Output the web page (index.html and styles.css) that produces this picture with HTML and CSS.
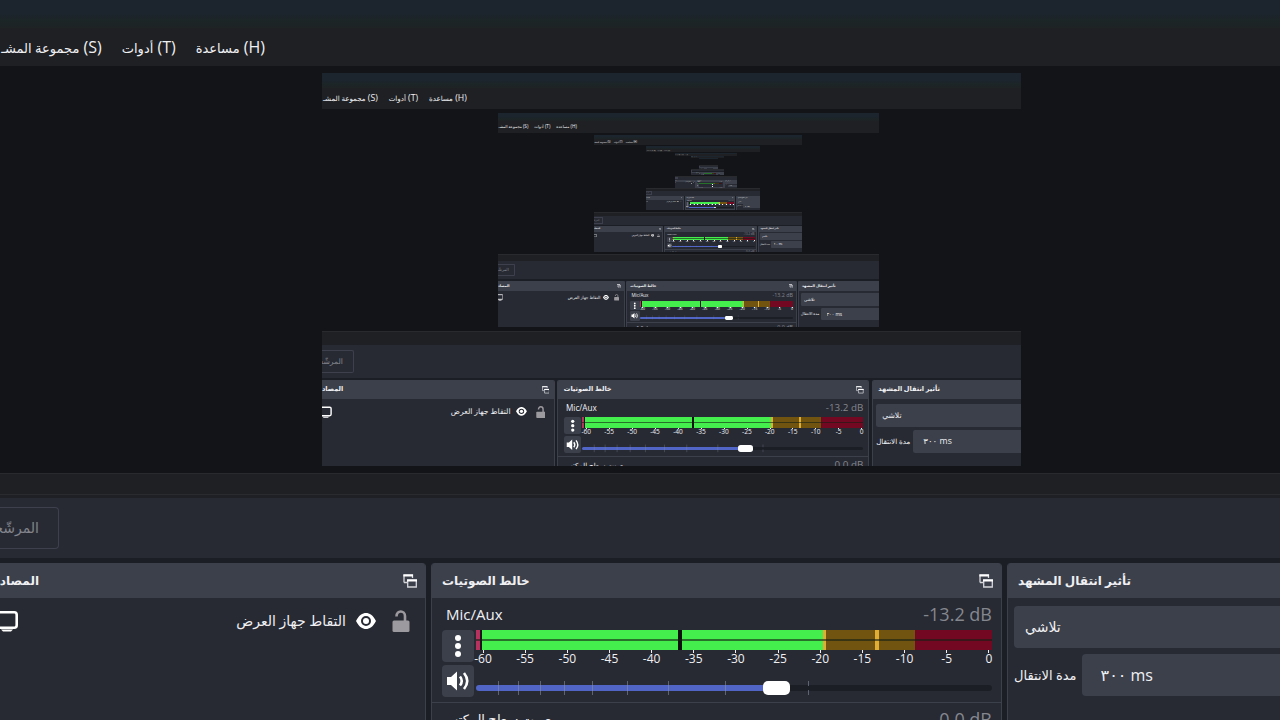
FILE: index.html
```html
<!DOCTYPE html>
<html lang="ar">
<head>
<meta charset="utf-8">
<title>OBS</title>
<link rel="stylesheet" href="styles.css">
</head>
<body>
<main id="root"></main>

<template id="window-template">
  <div class="window">
    <div class="titlebar"></div>
    <nav class="menubar">
      <button class="menu-item" type="button"><span class="ar">مجموعة المشـ</span> (S)</button>
      <button class="menu-item" type="button"><span class="ar">أدوات</span> (T)</button>
      <button class="menu-item" type="button"><span class="ar">مساعدة</span> (H)</button>
    </nav>
    <section class="preview"><div class="screen"></div></section>
    <div class="splitter"></div>
    <div class="toolbar"><button class="filters" type="button" disabled><span>المرشّحـ</span></button></div>
    <div class="docks">
      <section class="dock sources">
        <header class="dock-head">
          <h2 class="cut-title">المصاد</h2>
          <button class="popout" type="button" aria-label="Undock"><svg viewBox="0 0 14 14" width="14" height="14"><path d="M1 8.500V1H9.500V4M1 8.500H4" fill="none" stroke="#d5d6dc" stroke-width="1.300"/><path d="M.4 1.500H10" stroke="#fff" stroke-width="2"/><path d="M4.700 6H13.300V13H4.700z" fill="#3c404b" stroke="#d5d6dc" stroke-width="1.300"/><path d="M4 6.500H14" stroke="#fff" stroke-width="2"/></svg></button>
        </header>
        <div class="source-row">
          <svg class="monitor" viewBox="0 0 18 22" width="18" height="22"><rect x="-8" y="2.300" width="24.700" height="15.500" rx="2.500" fill="none" stroke="#fff" stroke-width="2.600"/><path d="M1 19.500H13L11 21.500H3z" fill="#fff"/></svg>
          <span class="source-name">التقاط جهاز العرض</span>
          <button class="icon" type="button" aria-label="Visible"><svg viewBox="0 0 20 16" width="20" height="16"><path fill-rule="evenodd" d="M0 8C3 2 6.500 0 10 0S17 2 20 8C17 14 13.500 16 10 16S3 14 0 8zM10 3A5 5 0 1 0 10 13 5 5 0 1 0 10 3z" fill="#fff"/><circle cx="10" cy="8" r="3" fill="#fff"/></svg></button>
          <button class="icon" type="button" aria-label="Lock"><svg viewBox="0 0 18 22" width="18" height="22"><rect x="0.500" y="10.500" width="17" height="11.500" rx="1.500" fill="#9c9a9e"/><path d="M4.500 6.500C4.500-.5 13 .2 13 6V11" fill="none" stroke="#9c9a9e" stroke-width="2.600"/></svg></button>
        </div>
      </section>
      <section class="dock mixer">
        <header class="dock-head">
          <h2>خالط الصوتيات</h2>
          <button class="popout" type="button" aria-label="Undock"><svg viewBox="0 0 14 14" width="14" height="14"><path d="M1 8.500V1H9.500V4M1 8.500H4" fill="none" stroke="#d5d6dc" stroke-width="1.300"/><path d="M.4 1.500H10" stroke="#fff" stroke-width="2"/><path d="M4.700 6H13.300V13H4.700z" fill="#3c404b" stroke="#d5d6dc" stroke-width="1.300"/><path d="M4 6.500H14" stroke="#fff" stroke-width="2"/></svg></button>
        </header>
        <div class="channel">
          <div class="channel-head"><span>Mic/Aux</span><span class="level">-13.2 dB</span></div>
          <div class="channel-body">
            <div class="channel-buttons">
              <button type="button" aria-label="Options"><svg viewBox="0 0 32 32" width="32" height="32" fill="#fff"><circle cx="16" cy="8" r="3"/><circle cx="16" cy="16" r="3"/><circle cx="16" cy="24" r="3"/></svg></button>
              <button type="button" aria-label="Mute"><svg viewBox="0 0 32 32" width="32" height="32"><path d="M5 12H9L15 6.500V25.500L9 20H5z" fill="#fff"/><path d="M18 11.500Q21.500 16 18 20.500M22 8Q28.500 16 22 24" fill="none" stroke="#fff" stroke-width="2.600"/></svg></button>
            </div>
            <div class="channel-controls">
              <div class="meter"></div>
              <div class="scale"><span>-60</span><span>-55</span><span>-50</span><span>-45</span><span>-40</span><span>-35</span><span>-30</span><span>-25</span><span>-20</span><span>-15</span><span>-10</span><span>-5</span><span>0</span></div>
              <div class="volume">
                <input type="range" min="0" max="1000" value="586" aria-label="Mic/Aux">
                <svg class="marks" viewBox="0 0 516 16" preserveAspectRatio="none"><path d="M22.500 1V15M42.500 1V15M64.500 1V15M88.500 1V15M116.500 1V15M151.500 1V15M192.500 1V15M249.500 1V15M332.500 1V6M332.500 10V15" stroke="#8d93a6" stroke-opacity=".55" stroke-width="1"/></svg>
              </div>
            </div>
          </div>
        </div>
        <div class="channel">
          <div class="channel-head"><span class="ar">صوت سطح المكتب</span><span class="level">0.0 dB</span></div>
        </div>
      </section>
      <section class="dock transitions">
        <header class="dock-head"><h2>تأثير انتقال المشهد</h2></header>
        <div class="transition-form">
          <select aria-label="تأثير انتقال المشهد"><option>تلاشي</option></select>
          <label class="duration"><span>مدة الانتقال</span><input type="text" value="٣٠٠ ms" dir="ltr"></label>
        </div>
      </section>
    </div>
  </div>
</template>
<script src="app.js"></script>
</body>
</html>
```

FILE: styles.css
```css
* { box-sizing: border-box; }
body { margin: 0; background: #1d1f26; overflow: hidden; }
#root { height: 100vh; display: grid; }

.window {
  min-width: 0;
  min-height: 0;
  display: flex;
  flex-direction: column;
  overflow: hidden;
  background: #1c1e26;
  color: #f0f0f3;
  font: 16px/20px "Open Sans", "DejaVu Sans", sans-serif;
}
.screen > .window { zoom: 0.546; }
button { font: inherit; color: inherit; background: none; border: 0; padding: 0; }
svg { display: block; }
.ar { font-size: 13px; }

.titlebar { flex: none; height: 28px; background: linear-gradient(#1c242d 50%, #1c2526 75%, #1e2324); }
.menubar {
  flex: none;
  height: 38px;
  width: 100%;
  padding-right: calc(100% - 265px);
  display: flex;
  justify-content: flex-end;
  align-items: center;
  gap: 20px;
  background: #1f2023;
}
.menu-item { flex: none; white-space: nowrap; }

.preview { flex: none; padding: 7px 0; background: #131418; }
.screen {
  width: 54.6%;
  aspect-ratio: 16 / 9;
  margin-left: 25.16%;
  display: grid;
  overflow: hidden;
  background: #131418;
}

.splitter {
  flex: none;
  height: 25px;
  background: linear-gradient(#1f2023 20px, #292b2f 20px, #292b2f 21px, #1e2025 21px);
  border-top: 1px solid #292a2e;
}
.toolbar { flex: none; height: 60px; padding: 9px 0; background: #272a33; }
.filters {
  width: 59px;
  height: 42px;
  padding-right: 19px;
  display: flex;
  justify-content: flex-end;
  align-items: center;
  overflow: hidden;
  border: 1px solid #3e414d;
  border-left: 0;
  border-radius: 0 4px 4px 0;
  color: #83858d;
  font-size: 14px;
}
.filters span { flex: none; }

.docks {
  flex: 1;
  min-height: 0;
  padding-top: 5px;
  display: grid;
  grid-template-columns: 426fr 571fr 273fr;
  gap: 5px;
}
.dock {
  min-width: 0;
  min-height: 0;
  overflow: hidden;
  background: #272a33;
  border: 1px solid #3c404b;
  border-width: 0 1px;
  border-radius: 4px 4px 0 0;
}
.sources { border-left: 0; border-top-left-radius: 0; }
.transitions { border-right: 0; border-top-right-radius: 0; }
.dock-head {
  height: 35px;
  padding: 0 8px 0 10px;
  display: flex;
  justify-content: space-between;
  align-items: center;
  background: #3c404b;
}
.sources .dock-head { padding-left: 0; }
.dock-head h2 { margin: 0; font-size: 12px; line-height: 20px; font-weight: 700; white-space: nowrap; }
.dock-head .cut-title { width: 39px; display: flex; justify-content: flex-end; }

.source-row { height: 45px; padding-right: 15px; display: flex; align-items: center; }
.source-name { margin-left: auto; font-size: 14px; }
.icon { margin-left: 10px; }
.icon + .icon { margin-left: 16px; }

.channel { padding: 6px 9px 5px 10px; border-bottom: 1px solid #3c404b; }
.channel-head { height: 20px; margin-bottom: 6px; padding-left: 4px; display: flex; justify-content: space-between; align-items: center; font-size: 15px; }
.channel-head .ar { font-size: 13px; }
.level { font-size: 18px; color: #85878f; }
.channel-body { display: flex; gap: 2px; }
.channel-buttons { flex: none; display: grid; gap: 3px; }
.channel-buttons button { width: 32px; height: 32px; border-radius: 4px; background: #3c404b; }
.channel-controls { flex: 1; min-width: 0; }
.meter {
  height: 20px;
  background:
    linear-gradient(transparent 45%, rgba(20, 30, 20, .6) 45%, rgba(20, 30, 20, .6) 53%, transparent 53%),
    linear-gradient(90deg,
      #b83260 0 .8%, #16171b .8% 1.2%, #44ee4d 1.2% 39.1%, #0b120d 39.1% 39.9%,
      #44ee4d 39.9% 67.2%, #dfae35 67.2% 67.9%, #70540f 67.9% 77.3%,
      #e0ae32 77.3% 78.1%, #70540f 78.1% 85.1%, #730823 85.1%);
}
.scale { height: 18px; padding: 0 3px 0 7px; display: flex; justify-content: space-between; font-size: 12px; line-height: 12px; }
.scale span { width: 0; display: flex; flex-direction: column; align-items: center; }
.scale span::before { content: ""; width: 1px; height: 3px; background: #f0f0f3; }
.volume { margin-top: 12px; height: 16px; display: grid; align-items: center; }
.volume > * { grid-area: 1 / 1; }
.volume input {
  appearance: none;
  width: 100%;
  height: 6px;
  margin: 0;
  border-radius: 3px;
  background: linear-gradient(90deg, #5065c5 58%, #1c1e26 58%);
}
.volume input::-webkit-slider-thumb { appearance: none; width: 27px; height: 14px; border-radius: 5px; background: #fff; }
.marks { width: 100%; height: 16px; pointer-events: none; }

.transition-form { padding: 8px 0 0 6px; display: grid; gap: 6px; }
.transition-form select,
.duration input {
  appearance: none;
  width: 100%;
  min-width: 0;
  height: 42px;
  border: 0;
  border-radius: 4px 0 0 4px;
  background: #3c404b;
  color: inherit;
  font: inherit;
}
.transition-form select { padding: 0 11px; font-size: 14px; }
.duration { display: flex; align-items: center; gap: 5px; font-size: 13px; }
.duration span { flex: none; }
.duration input { flex: 1; padding: 0 19px; font-size: 16px; }
```

FILE: app.js
```js
// The preview shows the window itself, so each window holds a smaller copy.
const template = document.getElementById("window-template");
const DEPTH = 8;
let host = document.getElementById("root");

for (let level = 0; level < DEPTH; level++) {
  const view = template.content.cloneNode(true).firstElementChild;
  if (level === 1) {
    view.inert = true;
    view.setAttribute("aria-hidden", "true");
  }
  host.append(view);
  host = view.querySelector(".screen");
}
```
